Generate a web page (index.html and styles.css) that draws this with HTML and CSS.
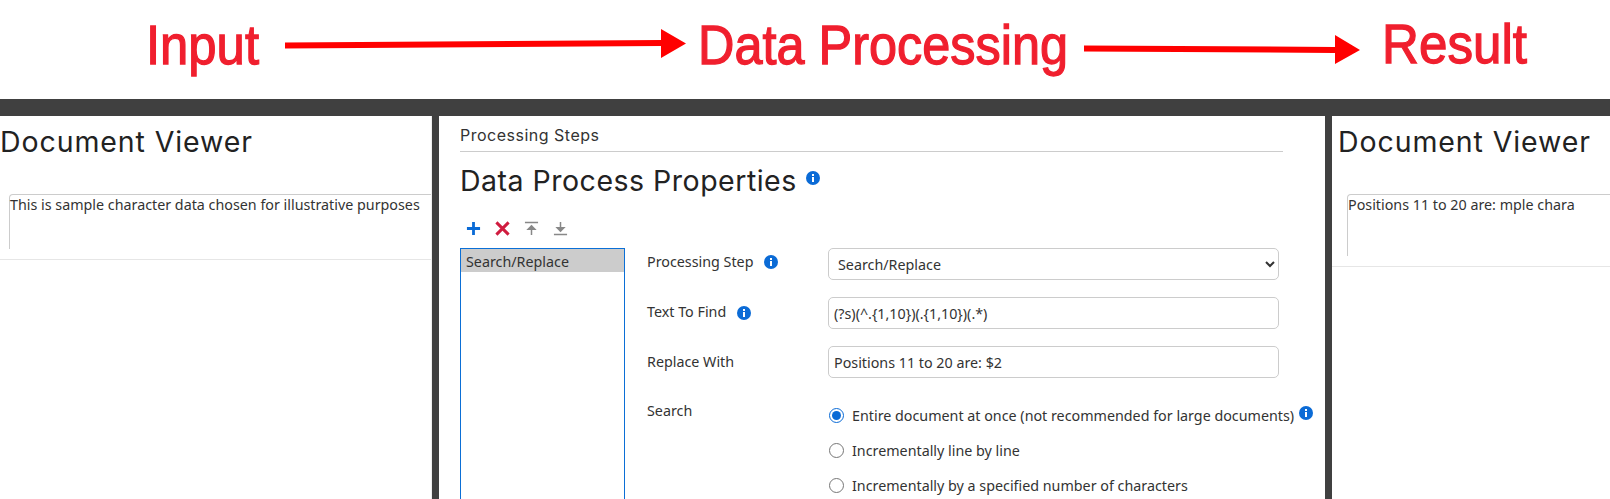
FILE: index.html
```html
<!DOCTYPE html>
<html lang="en">
<head>
<meta charset="utf-8">
<title>Data Processing</title>
<link rel="stylesheet" href="styles.css">
</head>
<body>
<svg class="banner" width="1610" height="99" viewBox="0 0 1610 99">
  <text class="banner-text" x="146" y="64" textLength="113" lengthAdjust="spacingAndGlyphs">Input</text>
  <polygon class="banner-arrow" points="285,42.5 661,40 661,29 686,43.5 661,58 661,46 285,48.5"/>
  <text class="banner-text" x="698" y="64" textLength="370" lengthAdjust="spacingAndGlyphs">Data Processing</text>
  <polygon class="banner-arrow" points="1084,45.5 1335,47 1335,35 1360,50 1335,64 1335,53 1084,51.5"/>
  <text class="banner-text" x="1382" y="63" textLength="145" lengthAdjust="spacingAndGlyphs">Result</text>
</svg>
<main class="workspace">
  <section class="viewer viewer-input">
    <h2 class="viewer-title">Document Viewer</h2>
    <div class="viewer-box"><p class="viewer-text">This is sample character data chosen for illustrative purposes</p></div>
  </section>
  <section class="process">
    <h3 class="steps-title">Processing Steps</h3>
    <h1 class="process-title">Data Process Properties
      <svg class="info info-title" viewBox="0 0 14 14"><circle cx="7" cy="7" r="7"/><rect class="info-mark" x="6" y="3" width="2" height="2"/><rect class="info-mark" x="6" y="6" width="2" height="5"/></svg>
    </h1>
    <div class="toolbar">
      <svg class="tool" viewBox="0 0 16 16"><path class="tool-add" d="M8 1v14M1 8h14"/></svg>
      <svg class="tool" viewBox="0 0 16 16"><path class="tool-del" d="M1.5 1.5l13 13M14.5 1.5l-13 13"/></svg>
      <svg class="tool" viewBox="0 0 16 16"><path class="tool-move" d="M1 1.5h14M8 15V6"/><path class="tool-head" d="M2.5 9.5L8 4l5.500 5.500z"/></svg>
      <svg class="tool" viewBox="0 0 16 16"><path class="tool-move" d="M1 14.500h14M8 1v9"/><path class="tool-head" d="M2.500 6.500L8 12l5.500-5.500z"/></svg>
    </div>
    <div class="editor">
      <div class="step-list"><div class="step-item">Search/Replace</div></div>
      <form class="form">
        <label class="field-label field-step">Processing Step
          <svg class="info" viewBox="0 0 14 14"><circle cx="7" cy="7" r="7"/><rect class="info-mark" x="6" y="3" width="2" height="2"/><rect class="info-mark" x="6" y="6" width="2" height="5"/></svg>
        </label>
        <select class="control select"><option>Search/Replace</option></select>
        <label class="field-label field-find">Text To Find
          <svg class="info" viewBox="0 0 14 14"><circle cx="7" cy="7" r="7"/><rect class="info-mark" x="6" y="3" width="2" height="2"/><rect class="info-mark" x="6" y="6" width="2" height="5"/></svg>
        </label>
        <input class="control text-input" type="text" value="(?s)(^.{1,10})(.{1,10})(.*)">
        <label class="field-label field-replace">Replace With</label>
        <input class="control text-input" type="text" value="Positions 11 to 20 are: $2">
        <span class="field-label field-search">Search</span>
        <div class="radios">
          <label class="radio"><input type="radio" name="search" checked>Entire document at once (not recommended for large documents)
            <svg class="info info-radio" viewBox="0 0 14 14"><circle cx="7" cy="7" r="7"/><rect class="info-mark" x="6" y="3" width="2" height="2"/><rect class="info-mark" x="6" y="6" width="2" height="5"/></svg>
          </label>
          <label class="radio"><input type="radio" name="search">Incrementally line by line</label>
          <label class="radio"><input type="radio" name="search">Incrementally by a specified number of characters</label>
        </div>
      </form>
    </div>
  </section>
  <section class="viewer viewer-result">
    <h2 class="viewer-title">Document Viewer</h2>
    <div class="viewer-box"><p class="viewer-text">Positions 11 to 20 are: mple chara</p></div>
  </section>
</main>
</body>
</html>
```
FILE: styles.css
```css
* { box-sizing: border-box; }
html, body { margin: 0; height: 499px; overflow: hidden; background: #fff; }
body { font-family: "Noto Sans", sans-serif; font-size: 14.3px; color: #333; }
.banner { display: block; }
.banner-text { font-family: "Liberation Sans", sans-serif; font-size: 56px; fill: #f01f2e; stroke: #f01f2e; stroke-width: 1.3px; }
.banner-arrow { fill: #ff0000; }

.workspace {
  display: flex;
  gap: 7px;
  height: 400px;
  background: #404040;
  border-top: 17px solid #404040;
}

.viewer { background: #fff; overflow: hidden; }
.viewer-input { width: 432px; border-right: 1px solid #eee; }
.viewer-result { flex: 1; padding-left: 6px; }
.viewer-title {
  margin: 0;
  padding-top: 9px;
  font-family: Inter, sans-serif;
  font-weight: 400;
  font-size: 28.5px;
  letter-spacing: 0.9px;
  line-height: 34px;
  color: #222;
}
.viewer-box {
  width: 600px;
  height: 55px;
  margin: 35px 0 10px 9px;
  border: 1px solid #ccc;
  border-bottom: 0;
  border-radius: 4px 0 0 0;
}
.viewer-result .viewer-box { height: 62px; }
.viewer-text { margin: 0; font-size: 14.3px; line-height: 20px; white-space: nowrap; color: #333; }
.viewer::after { content: ""; display: block; height: 1px; background: #e6e6e6; }
.viewer-result::after { margin-left: -6px; }

.process { width: 886px; padding-left: 21px; background: #fff; overflow: hidden; }
.steps-title {
  width: 823px;
  margin: 0;
  padding-top: 8px;
  height: 36px;
  border-bottom: 1px solid #ccc;
  font-family: Inter, sans-serif;
  font-weight: 400;
  font-size: 16px;
  letter-spacing: 0.5px;
  line-height: 22px;
  color: #333;
}
.process-title {
  margin: 0;
  padding-top: 12px;
  height: 54px;
  font-family: Inter, sans-serif;
  font-weight: 400;
  font-size: 28.5px;
  letter-spacing: 0.5px;
  line-height: 34px;
  color: #222;
  white-space: nowrap;
}
.info { width: 14px; height: 14px; fill: #0b6bd6; vertical-align: -2px; margin-left: 7px; }
.info-mark { fill: #fff; }
.info-title { vertical-align: 6px; margin-left: 1px; }
.field-find .info { vertical-align: -3px; }

.toolbar { display: flex; gap: 14px; height: 42px; padding: 15px 0 0 6px; }
.tool { width: 15px; height: 15px; }
.tool-add { fill: none; stroke: #0b6bd6; stroke-width: 3; }
.tool-del { fill: none; stroke: #d01c3f; stroke-width: 3.2; }
.tool-move { fill: none; stroke: #888; stroke-width: 1.6; }
.tool-head { fill: #888; }

.editor { display: flex; gap: 22px; }
.step-list { width: 165px; height: 260px; border: 1px solid #0b6fd6; flex: none; }
.step-item { height: 23px; line-height: 25px; padding-left: 5px; background: #ccc; color: #333; }

.form {
  display: grid;
  grid-template-columns: 181px 451px;
  grid-auto-rows: min-content;
  row-gap: 17px;
  align-content: start;
}
.field-label { line-height: 20px; padding-top: 4px; }
.control {
  height: 32px;
  margin: 0;
  border: 1px solid #ccc;
  border-radius: 5px;
  background: #fff;
  font-family: "Noto Sans", sans-serif;
  font-size: 14.3px;
  color: #333;
  width: 100%;
}
.select { padding-left: 5px; }
.text-input { padding: 0 5px; }
.field-find { padding-top: 5px; }
.field-replace { padding-top: 6px; }
.field-search { padding-top: 6px; }
.radios { display: flex; flex-direction: column; gap: 15px; padding-top: 10px; }
.radio { display: flex; align-items: center; height: 20px; white-space: nowrap; }
.radio input { width: 15px; height: 15px; margin: 0 8px 0 1px; accent-color: #0b6bd6; flex: none; }
.info-radio { margin-left: 5px; flex: none; position: relative; top: -2px; }
```
